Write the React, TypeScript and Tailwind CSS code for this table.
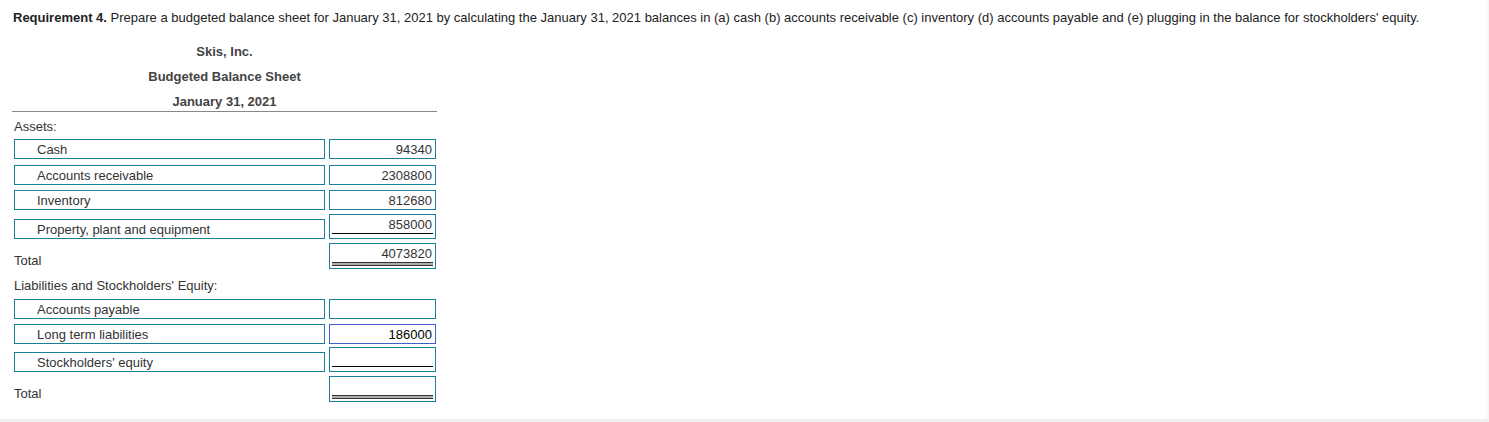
import React from 'react';

const font = "font-['Liberation_Sans',Arial,sans-serif]";

type Line = 'none' | 'single' | 'double';

const LabelBox = ({ text }: { text: string }) => (
  <div className="ml-[2px] h-[20px] w-[311px] border border-[#1b7f9a] pl-[22px] text-[13px] leading-[19px] text-[#333]">
    {text}
  </div>
);

const ValueBox = ({
  value,
  line = 'none',
  focused = false,
}: {
  value?: string;
  line?: Line;
  focused?: boolean;
}) => {
  if (line === 'none') {
    return (
      <div
        className={`h-[20px] w-[107px] border pr-[3px] text-right text-[13px] leading-[19px] ${
          focused ? 'border-[#3d5fd0] text-black' : 'border-[#1b7f9a] text-[#333]'
        }`}
      >
        {value}
      </div>
    );
  }
  if (line === 'single') {
    return (
      <div className="h-[25px] w-[107px] border border-[#1b7f9a] text-[13px] text-[#333]">
        <div className="h-[17px] pr-[3px] text-right leading-[19px]">{value}</div>
        <div className="mx-[2px] mt-[1px] h-[1px] bg-black" />
      </div>
    );
  }
  return (
    <div className="h-[26px] w-[107px] border border-[#1b7f9a] text-[13px] text-[#333]">
      <div className="h-[18px] pr-[3px] pt-[1px] text-right leading-[18px]">{value}</div>
      <div className="mx-[2px] h-[4px] border-y border-[#333] bg-[#b0b0b0]" />
    </div>
  );
};

const Row = ({
  label,
  value,
  line = 'none',
  focused,
  className = '',
}: {
  label: string;
  value?: string;
  line?: Line;
  focused?: boolean;
  className?: string;
}) => (
  <div className={`flex items-end gap-[4px] ${className}`}>
    <LabelBox text={label} />
    <ValueBox value={value} line={line} focused={focused} />
  </div>
);

const TotalRow = ({ value, className = '' }: { value?: string; className?: string }) => (
  <div className={`flex items-end gap-[4px] ${className}`}>
    <div className="mb-[1px] w-[313px] pl-[2px] text-[13px] leading-[14px] text-[#333]">Total</div>
    <ValueBox value={value} line="double" />
  </div>
);

export default function App() {
  return (
    <div className={`flex h-[422px] w-full flex-col bg-white ${font}`}>
      <div className="flex flex-1">
        <div className="flex-1 pl-[12px] pt-[10px]">
          <p className="ml-[1px] text-[13px] leading-[15px] text-[#222]">
            <span className="font-bold">Requirement 4.</span> Prepare a budgeted balance sheet for
            January 31, 2021 by calculating the January 31, 2021 balances in (a) cash (b) accounts
            receivable (c) inventory (d) accounts payable and (e) plugging in the balance for
            stockholders' equity.
          </p>

          <div className="mt-[14px] w-[425px] text-center text-[13px] font-bold text-[#444]">
            <div className="h-[25px] leading-[25px]">Skis, Inc.</div>
            <div className="h-[25px] leading-[25px]">Budgeted Balance Sheet</div>
            <div className="h-[22px] leading-[25px]">January 31, 2021</div>
            <div className="h-[1px] bg-[#888]" />
          </div>

          <div className="mt-[8px] pl-[2px] text-[13px] leading-[14px] text-[#333]">Assets:</div>
          <Row className="mt-[5px]" label="Cash" value="94340" />
          <Row className="mt-[6px]" label="Accounts receivable" value="2308800" />
          <Row className="mt-[5px]" label="Inventory" value="812680" />
          <Row className="mt-[4px]" label="Property, plant and equipment" value="858000" line="single" />
          <TotalRow className="mt-[4px]" value="4073820" />

          <div className="mt-[10px] pl-[2px] text-[13px] leading-[14px] text-[#333]">
            Liabilities and Stockholders' Equity:
          </div>
          <Row className="mt-[6px]" label="Accounts payable" />
          <Row className="mt-[5px]" label="Long term liabilities" value="186000" focused />
          <Row className="mt-[3px]" label="Stockholders' equity" line="single" />
          <TotalRow className="mt-[4px]" />
        </div>
        <div className="w-[4px] bg-gradient-to-r from-white to-[#f4f4f4]" />
      </div>
      <div className="h-[3px] bg-[#f0f0f0]" />
    </div>
  );
}
